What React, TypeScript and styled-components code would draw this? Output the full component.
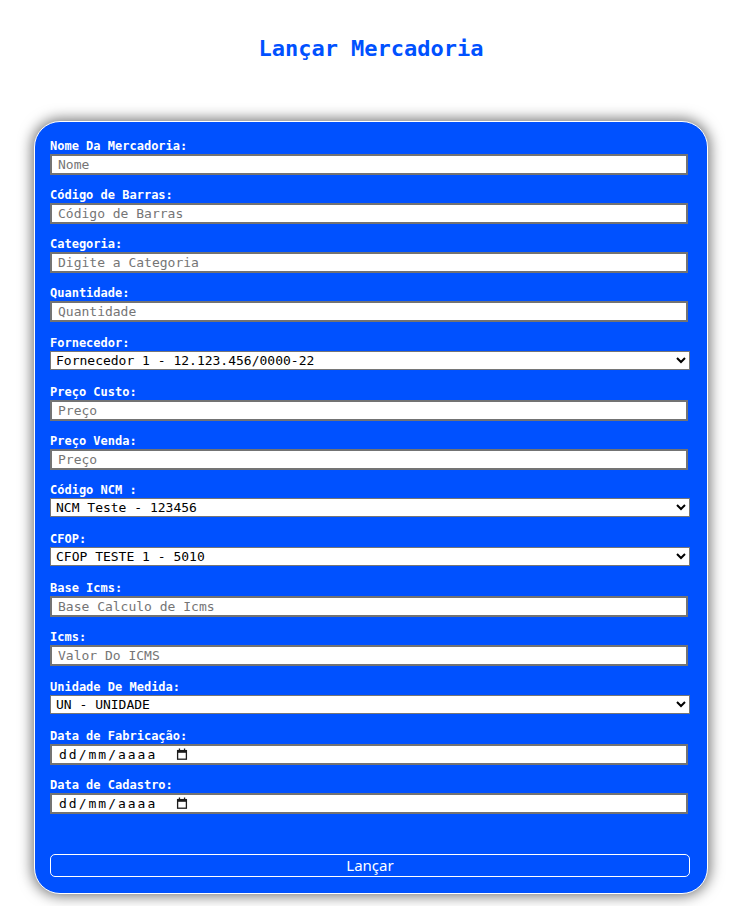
import React from "react";
import styled, { createGlobalStyle } from "styled-components";

const GlobalStyle = createGlobalStyle`
  html, body { margin: 0; padding: 0; background: #ffffff; }
  body { font-family: "DejaVu Sans Mono", "Liberation Mono", monospace; }
  * { box-sizing: border-box; }
`;

const BLUE = "#0051ff";

const Page = styled.div`
  display: flex;
  flex-direction: column;
  align-items: center;
  padding-top: 36px;
  padding-bottom: 12px;
`;

const Title = styled.h1`
  margin: 0 0 59px;
  font-family: "DejaVu Sans Mono", monospace;
  font-size: 22px;
  line-height: 26px;
  font-weight: bold;
  color: ${BLUE};
`;

const Card = styled.form`
  width: 674px;
  background: ${BLUE};
  border: 1px solid #ffffff;
  border-radius: 26px;
  padding: 16px 17px 16px 15px;
  box-shadow: 0 0 14px 2px rgba(0, 0, 0, 0.55);
  display: flex;
  flex-direction: column;
`;

const Field = styled.div`
  height: 49.15px;
  display: flex;
  flex-direction: column;
  align-items: flex-start;
`;

const Label = styled.label`
  display: block;
  font-family: "DejaVu Sans Mono", monospace;
  font-size: 12px;
  line-height: 16px;
  font-weight: bold;
  color: #ffffff;
`;

const TextInput = styled.input`
  width: 638px;
  height: 21px;
  margin: 0;
  border: 2px solid #737373;
  border-radius: 0;
  padding: 0 6px;
  background: #ffffff;
  font-family: "DejaVu Sans Mono", monospace;
  font-size: 13px;
  color: #000;
  outline: none;
  &::placeholder { color: #757575; }
`;

const Select = styled.select`
  width: 640px;
  height: 19px;
  margin: 0;
  border: 1px solid #767676;
  border-radius: 0;
  padding: 0 1px;
  background: #ffffff;
  font-family: "DejaVu Sans Mono", monospace;
  font-size: 13px;
  color: #000;
  outline: none;
`;

const DateBox = styled.div`
  width: 638px;
  height: 21px;
  border: 2px solid #737373;
  background: #ffffff;
  display: flex;
  align-items: center;
  padding-left: 7px;
`;

const DateText = styled.span`
  font-family: "DejaVu Sans Mono", monospace;
  font-size: 13px;
  letter-spacing: 2px;
  color: #000;
`;

const CalendarIcon = styled.svg`
  margin-left: 19px;
  width: 12px;
  height: 12px;
`;

const SubmitButton = styled.button`
  margin-top: 28px;
  width: 640px;
  height: 23px;
  border: 1px solid #ffffff;
  border-radius: 5px;
  background: transparent;
  color: #ffffff;
  font-family: "Noto Sans", "Open Sans", sans-serif;
  font-size: 15px;
  line-height: 21px;
  padding: 0;
  cursor: pointer;
`;

const Calendar = () => (
  <CalendarIcon viewBox="0 0 12 12">
    <rect x="1.6" y="2.6" width="8.8" height="8.6" fill="none" stroke="#1b1b1b" strokeWidth="1.3" />
    <rect x="1" y="2" width="10" height="2.8" fill="#1b1b1b" />
    <rect x="2.8" y="0.5" width="1.3" height="2.2" fill="#1b1b1b" />
    <rect x="7.9" y="0.5" width="1.3" height="2.2" fill="#1b1b1b" />
  </CalendarIcon>
);

type FieldDef =
  | { kind: "text"; label: string; placeholder: string }
  | { kind: "select"; label: string; options: string[] }
  | { kind: "date"; label: string };

const fields: FieldDef[] = [
  { kind: "text", label: "Nome Da Mercadoria:", placeholder: "Nome" },
  { kind: "text", label: "Código de Barras:", placeholder: "Código de Barras" },
  { kind: "text", label: "Categoria:", placeholder: "Digite a Categoria" },
  { kind: "text", label: "Quantidade:", placeholder: "Quantidade" },
  { kind: "select", label: "Fornecedor:", options: ["Fornecedor 1 - 12.123.456/0000-22"] },
  { kind: "text", label: "Preço Custo:", placeholder: "Preço" },
  { kind: "text", label: "Preço Venda:", placeholder: "Preço" },
  { kind: "select", label: "Código NCM :", options: ["NCM Teste - 123456"] },
  { kind: "select", label: "CFOP:", options: ["CFOP TESTE 1 - 5010"] },
  { kind: "text", label: "Base Icms:", placeholder: "Base Calculo de Icms" },
  { kind: "text", label: "Icms:", placeholder: "Valor Do ICMS" },
  { kind: "select", label: "Unidade De Medida:", options: ["UN - UNIDADE"] },
  { kind: "date", label: "Data de Fabricação:" },
  { kind: "date", label: "Data de Cadastro:" },
];

export default function App() {
  return (
    <>
      <GlobalStyle />
      <Page>
        <Title>Lançar Mercadoria</Title>
        <Card onSubmit={(e) => e.preventDefault()}>
          {fields.map((f, i) => (
            <Field key={i}>
              <Label>{f.label}</Label>
              {f.kind === "text" && <TextInput type="text" placeholder={f.placeholder} />}
              {f.kind === "select" && (
                <Select defaultValue={f.options[0]}>
                  {f.options.map((o) => (
                    <option key={o}>{o}</option>
                  ))}
                </Select>
              )}
              {f.kind === "date" && (
                <DateBox>
                  <DateText>dd/mm/aaaa</DateText>
                  <Calendar />
                </DateBox>
              )}
            </Field>
          ))}
          <SubmitButton type="submit">Lançar</SubmitButton>
        </Card>
      </Page>
    </>
  );
}
